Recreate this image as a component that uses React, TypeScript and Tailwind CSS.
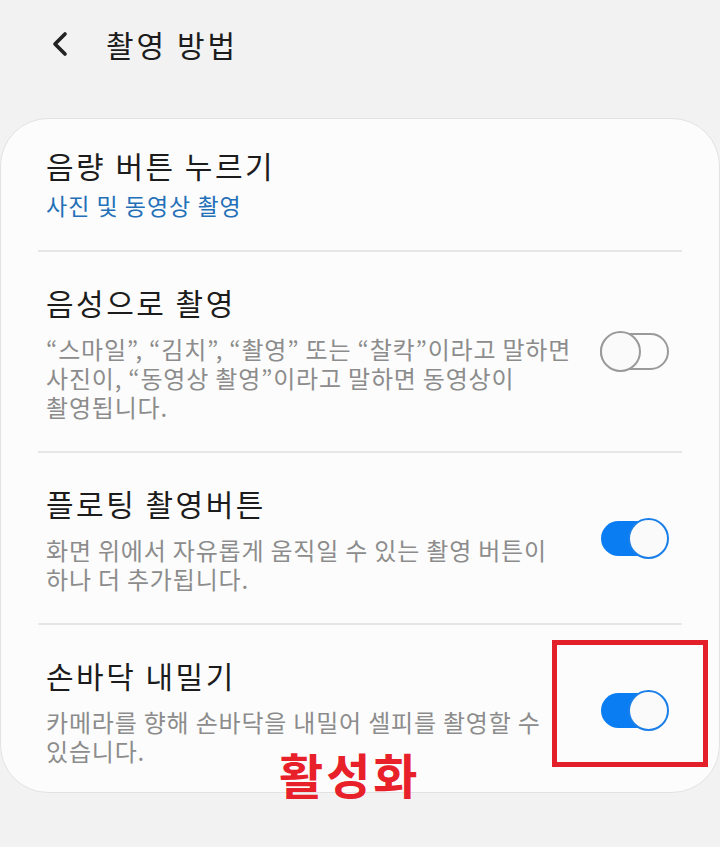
import { ChevronLeft } from "lucide-react";

type Item = {
  title: string;
  sub?: string;
  desc?: string[];
  toggle?: "on" | "off";
};

const items: Item[] = [
  { title: "음량 버튼 누르기", sub: "사진 및 동영상 촬영" },
  {
    title: "음성으로 촬영",
    desc: [
      "“스마일”, “김치”, “촬영” 또는 “찰칵”이라고 말하면",
      "사진이, “동영상 촬영”이라고 말하면 동영상이",
      "촬영됩니다.",
    ],
    toggle: "off",
  },
  {
    title: "플로팅 촬영버튼",
    desc: ["화면 위에서 자유롭게 움직일 수 있는 촬영 버튼이", "하나 더 추가됩니다."],
    toggle: "on",
  },
  {
    title: "손바닥 내밀기",
    desc: ["카메라를 향해 손바닥을 내밀어 셀피를 촬영할 수", "있습니다."],
    toggle: "on",
  },
];

function Toggle({ on }: { on: boolean }) {
  if (!on) {
    return (
      <div className="relative w-[69px] h-[41px] shrink-0">
        <div className="absolute left-0 right-0 top-[2px] h-[37px] rounded-full border-2 border-[#9a9a9a]" />
        <div className="absolute left-0 top-0 w-[41px] h-[41px] rounded-full border-2 border-[#9a9a9a] bg-[#fafafa]" />
      </div>
    );
  }
  return (
    <div className="relative w-[69px] h-[41px] shrink-0">
      <div className="absolute left-[1px] right-[6px] top-[3px] h-[35px] rounded-full bg-[#0b7df2]" />
      <div className="absolute right-0 top-0 w-[41px] h-[41px] rounded-full border-2 border-[#1a7fe8] bg-[#fafafa]" />
    </div>
  );
}

export default function App() {
  return (
    <div
      className="relative min-h-screen bg-[#f2f2f2] text-[#1c1c1c]"
      style={{ fontFamily: '"Noto Sans CJK KR", "Noto Sans", sans-serif' }}
    >
      <header className="h-[88px] flex items-center">
        <ChevronLeft size={40} strokeWidth={2.2} className="ml-[40px] text-[#222]" />
        <h1 className="ml-[26px] text-[30px] leading-[40px] tracking-[3px]">촬영 방법</h1>
      </header>

      <div className="mt-[30px] bg-[#fcfcfc] border border-[#e2e2e2] rounded-[48px] px-[37px]">
        {items.map((it, i) => {
          const pad =
            i === 0
              ? "pt-[26px] pb-[30px]"
              : i === items.length - 1
                ? "pt-[30px] pb-[27px]"
                : "py-[30px]";
          return (
            <div key={i} className={i > 0 ? "border-t-2 border-[#e6e6e6]" : ""}>
              <div className={"flex items-center px-[8px] " + pad}>
                <div className="flex-1">
                  <div className="text-[30px] leading-[40px] tracking-[2.5px]">{it.title}</div>
                  {it.sub && (
                    <div className="mt-[6px] text-[23px] leading-[29px] tracking-[1px] text-[#2470b8]">
                      {it.sub}
                    </div>
                  )}
                  {it.desc && (
                    <div className="mt-[12px] text-[24px] leading-[29px] tracking-[0.8px] text-[#8c8c8c]">
                      {it.desc.map((d, j) => (
                        <div key={j} className="whitespace-nowrap">
                          {d}
                        </div>
                      ))}
                    </div>
                  )}
                </div>
                {it.toggle && (
                  <div className="mr-[5px]">
                    <Toggle on={it.toggle === "on"} />
                  </div>
                )}
              </div>
            </div>
          );
        })}
      </div>

      {/* annotation */}
      <div className="absolute left-[552px] top-[640px] w-[156px] h-[127px] border-[5px] border-[#e3202a]" />
      <div className="absolute left-[279px] top-[743px] text-[48px] leading-[60px] tracking-[3px] font-bold text-[#e8202a]">
        활성화
      </div>
    </div>
  );
}
